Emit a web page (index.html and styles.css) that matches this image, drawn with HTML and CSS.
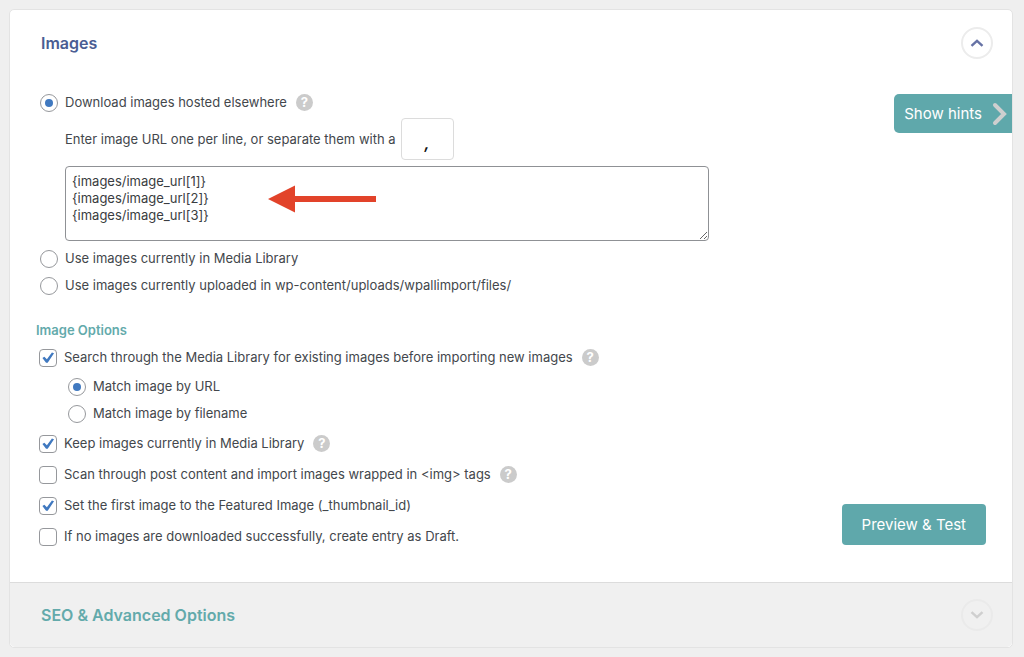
FILE: index.html
```html
<!DOCTYPE html>
<html lang="en">
<head>
    <meta charset="UTF-8">
    <meta name="viewport" content="width=device-width, initial-scale=1.0">
    <title>Import Images</title>
    <link rel="stylesheet" href="styles.css">
</head>
<body>

    <form class="panel">
        <div class="panel-header">
            <h2>Images</h2>
            <button type="button" class="toggle" aria-label="Collapse Images">
                <svg width="14" height="8" viewBox="0 0 14 8"><path d="M1.5 6.8 L7 1.8 L12.5 6.8"/></svg>
            </button>
        </div>

        <div class="panel-body">
            <div class="source">
                <div class="radio-group">
                    <div class="radio-row">
                        <label><input type="radio" name="source" checked>Download images hosted elsewhere</label>
                        <a href="#" class="help" aria-label="Help">?</a>
                    </div>
                    <div class="url-fields">
                        <div class="separator-row">
                            <label for="separator">Enter image URL one per line, or separate them with a</label>
                            <input type="text" id="separator" class="separator" value=",">
                        </div>
                        <div class="url-box">
                            <textarea id="imageUrls" aria-label="Image URLs" spellcheck="false">{images/image_url[1]}
{images/image_url[2]}
{images/image_url[3]}</textarea>
                            <svg class="arrow" width="110" height="28" viewBox="0 0 110 28"><path d="M0 14 L27 0.5 V11 H108 V17 H27 V27.5 Z"/></svg>
                        </div>
                    </div>
                    <div class="radio-row">
                        <label><input type="radio" name="source">Use images currently in Media Library</label>
                    </div>
                    <div class="radio-row">
                        <label><input type="radio" name="source">Use images currently uploaded in wp-content/uploads/wpallimport/files/</label>
                    </div>
                </div>
                <button type="button" class="hints">
                    Show hints
                    <svg width="16" height="24" viewBox="0 0 16 24"><path d="M3 3 L12 12 L3 21"/></svg>
                </button>
            </div>

            <div class="options">
                <div class="option-list">
                    <h4>Image Options</h4>
                    <div class="check-row">
                        <label><input type="checkbox" checked>Search through the Media Library for existing images before importing new images</label>
                        <a href="#" class="help" aria-label="Help">?</a>
                    </div>
                    <div class="match">
                        <div class="radio-row">
                            <label><input type="radio" name="match" checked>Match image by URL</label>
                        </div>
                        <div class="radio-row">
                            <label><input type="radio" name="match">Match image by filename</label>
                        </div>
                    </div>
                    <div class="check-row">
                        <label><input type="checkbox" checked>Keep images currently in Media Library</label>
                        <a href="#" class="help" aria-label="Help">?</a>
                    </div>
                    <div class="check-row">
                        <label><input type="checkbox">Scan through post content and import images wrapped in &lt;img&gt; tags</label>
                        <a href="#" class="help" aria-label="Help">?</a>
                    </div>
                    <div class="check-row">
                        <label><input type="checkbox" checked>Set the first image to the Featured Image (_thumbnail_id)</label>
                    </div>
                    <div class="check-row">
                        <label><input type="checkbox">If no images are downloaded successfully, create entry as Draft.</label>
                    </div>
                </div>
                <button type="button" class="preview">Preview &amp; Test</button>
            </div>
        </div>

        <div class="panel-header closed">
            <h2>SEO &amp; Advanced Options</h2>
            <button type="button" class="toggle" aria-label="Expand SEO &amp; Advanced Options">
                <svg width="14" height="8" viewBox="0 0 14 8"><path d="M1.5 1.2 L7 6.2 L12.5 1.2"/></svg>
            </button>
        </div>
    </form>

</body>
</html>
```

FILE: styles.css
```css
* {
    box-sizing: border-box;
}
body {
    margin: 0;
    padding: 9px 11px 9px 9px;
    background-color: #efefef;
    color: #43474c;
    font-family: Inter, "Liberation Sans", sans-serif;
    font-size: 13px;
    line-height: 17px;
}
button, input, textarea {
    font-family: inherit;
}
button {
    cursor: pointer;
}
.panel {
    background-color: #fff;
    border: 1px solid #e3e3e3;
    border-radius: 5px;
}

/* section headers */
.panel-header {
    display: flex;
    align-items: center;
    justify-content: space-between;
    height: 65px;
    padding: 0 19px 0 31px;
}
.panel-header h2 {
    margin: 0;
    font-size: 16px;
    font-weight: 600;
    line-height: 20px;
    color: #4a5d93;
}
.panel-header.closed {
    background-color: #f0f0f0;
    border-top: 1px solid #dcdcdc;
    border-radius: 0 0 5px 5px;
}
.panel-header.closed h2 {
    color: #63aaab;
}
.toggle {
    display: flex;
    align-items: center;
    justify-content: center;
    width: 32px;
    height: 32px;
    padding: 0;
    background-color: #fff;
    border: 2px solid #ececec;
    border-radius: 50%;
}
.toggle path {
    fill: none;
    stroke: #6672a5;
    stroke-width: 2.4;
}
.closed .toggle {
    background-color: transparent;
    border-color: #eaeaea;
}
.closed .toggle path {
    stroke: #cfcfcf;
}

/* image source */
.panel-body {
    padding: 14px 0 30px 26px;
}
.source {
    display: flex;
    align-items: flex-start;
    justify-content: space-between;
}
.radio-group {
    flex: 1;
    max-width: 673px;
    padding-left: 4px;
}
.radio-row, .check-row {
    display: flex;
    align-items: center;
    gap: 9px;
    height: 27px;
}
.check-row {
    height: 31px;
    padding-left: 3px;
}
.radio-row label, .check-row label {
    display: flex;
    align-items: center;
    gap: 7px;
}
input[type="radio"], input[type="checkbox"] {
    display: flex;
    align-items: center;
    justify-content: center;
    appearance: none;
    width: 18px;
    height: 18px;
    margin: 0;
    background-color: #fff;
    border: 1px solid #96989c;
}
input[type="radio"] {
    border-radius: 50%;
}
input[type="checkbox"] {
    border-radius: 4px;
}
input[type="radio"]:checked::before {
    content: "";
    width: 8px;
    height: 8px;
    background-color: #4079c0;
    border-radius: 50%;
}
input[type="checkbox"]:checked::before {
    content: "";
    width: 14px;
    height: 14px;
    background-color: #4079c0;
    clip-path: polygon(10% 54%, 24% 44%, 42% 62%, 78% 14%, 93% 20%, 48% 88%, 36% 88%);
}
.help {
    display: flex;
    align-items: center;
    justify-content: center;
    width: 17px;
    height: 17px;
    background-color: #cbcbcb;
    border-radius: 50%;
    color: #fff;
    font-size: 13px;
    font-weight: 700;
    text-decoration: none;
}
.url-fields {
    padding: 2px 0 4px 25px;
}
.separator-row {
    display: flex;
    align-items: center;
    gap: 5px;
    margin-bottom: 6px;
}
.separator {
    width: 53px;
    height: 42px;
    padding: 8px 0 0;
    border: 1px solid #dcdcdc;
    border-radius: 4px;
    color: #111;
    font-size: 16px;
    font-style: italic;
    font-weight: 600;
    text-align: center;
}
.url-box {
    position: relative;
}
.url-box textarea {
    display: block;
    width: 100%;
    height: 75px;
    padding: 6px;
    border: 1px solid #8f9195;
    border-radius: 4px;
    color: #3a3d41;
    font-size: 13px;
    line-height: 17px;
}
.arrow {
    position: absolute;
    top: 19px;
    left: 203px;
    fill: #e2432a;
    pointer-events: none;
}
.hints {
    display: flex;
    align-items: center;
    gap: 10px;
    height: 39px;
    margin-top: 5px;
    padding: 0 4px 0 10px;
    background-color: #5fa8ab;
    border: none;
    border-radius: 5px 0 0 5px;
    color: #fff;
    font-size: 15px;
}
.hints path {
    fill: none;
    stroke: #cfcfcf;
    stroke-width: 4;
    stroke-linecap: round;
}

/* image options */
.options {
    display: flex;
    align-items: flex-end;
    justify-content: space-between;
    padding: 23px 26px 0 0;
}
.options h4 {
    margin: 0 0 3px;
    font-size: 13px;
    font-weight: 600;
    color: #63aaab;
}
.match {
    padding: 0 0 1px 32px;
}
.preview {
    height: 41px;
    margin-bottom: 7px;
    padding: 0 20px;
    background-color: #5fa8ab;
    border: none;
    border-radius: 4px;
    color: #fff;
    font-size: 15px;
}
```
